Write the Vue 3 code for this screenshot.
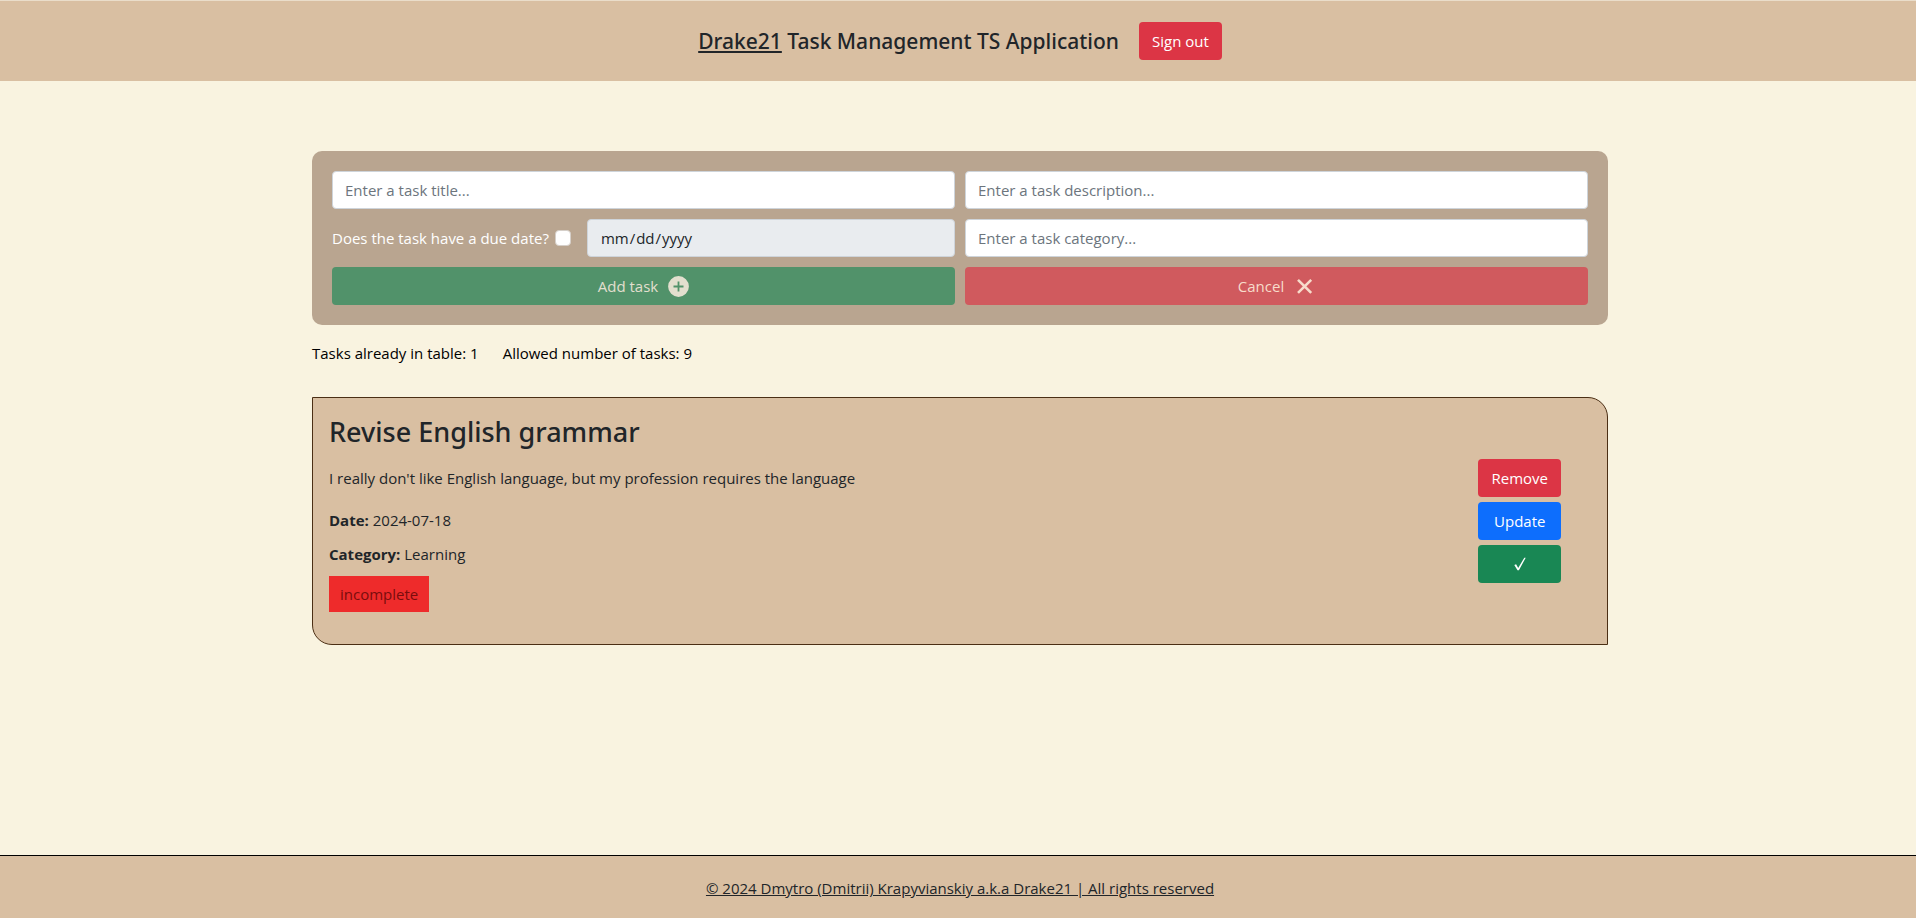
<script setup>
import { ref } from 'vue'

const title = ref('')
const description = ref('')
const category = ref('')
const dueDate = ref('')
const hasDueDate = ref(false)

const allowed = 9
const tasks = ref([
  {
    id: 1,
    title: 'Revise English grammar',
    description: "I really don't like English language, but my profession requires the language",
    date: '2024-07-18',
    category: 'Learning',
    status: 'incomplete'
  }
])
</script>

<template>
  <div class="page">
    <header class="header">
      <h1 class="brand"><span class="brand-name">Drake21</span> Task Management TS Application</h1>
      <button type="button" class="btn danger">Sign out</button>
    </header>

    <main class="content">
      <form class="task-form" @submit.prevent>
        <input v-model="title" class="field" type="text" placeholder="Enter a task title..." aria-label="Task title" />
        <input v-model="description" class="field" type="text" placeholder="Enter a task description..." aria-label="Task description" />
        <div class="due">
          <label class="due-label" for="has-due">Does the task have a due date?</label>
          <input id="has-due" v-model="hasDueDate" class="check" type="checkbox" />
          <input v-model="dueDate" class="field date" type="date" aria-label="Due date" :disabled="!hasDueDate" />
        </div>
        <input v-model="category" class="field" type="text" placeholder="Enter a task category..." aria-label="Task category" />
        <button type="submit" class="btn success" :disabled="!title">
          <span>Add task</span>
          <svg class="icon" viewBox="0 0 21 21" aria-hidden="true">
            <path fill="currentColor" fill-rule="evenodd" d="M10.5 0.1a10.4 10.4 0 1 0 0 20.8a10.4 10.4 0 1 0 0-20.8zM9.6 5.5h1.8v4.1h4.1v1.8h-4.1v4.1H9.6v-4.1H5.5V9.6h4.1z" />
          </svg>
        </button>
        <button type="button" class="btn danger" :disabled="!title">
          <span>Cancel</span>
          <svg class="icon" viewBox="0 0 21 21" aria-hidden="true">
            <path fill="none" stroke="currentColor" stroke-width="2.6" d="M4 3.9L17.2 16.9M17.2 3.9L4 16.9" />
          </svg>
        </button>
      </form>

      <div class="counts">
        <span>Tasks already in table: {{ tasks.length }}</span>
        <span>Allowed number of tasks: {{ allowed }}</span>
      </div>

      <article v-for="task in tasks" :key="task.id" class="card">
        <div class="info">
          <h2 class="card-title">{{ task.title }}</h2>
          <p class="description">{{ task.description }}</p>
          <p class="meta"><strong>Date:</strong> {{ task.date }}</p>
          <p class="meta"><strong>Category:</strong> {{ task.category }}</p>
          <span class="status">{{ task.status }}</span>
        </div>
        <div class="actions">
          <button type="button" class="btn danger">Remove</button>
          <button type="button" class="btn primary">Update</button>
          <button type="button" class="btn success" aria-label="Mark as complete">
            <svg class="tick" viewBox="0 0 12 14" aria-hidden="true">
              <path fill="currentColor" d="M0.3 8.1L2.1 7.3L4.2 11L10.3 0.8H11.7L4.9 13.2H3.5z" />
            </svg>
          </button>
        </div>
      </article>
    </main>

    <footer class="footer">
      <a href="#" class="copyright">© 2024 Dmytro (Dmitrii) Krapyvianskiy a.k.a Drake21 | All rights reserved</a>
    </footer>
  </div>
</template>

<style>
body {
  margin: 0;
  background: #f9f3e0;
}
</style>

<style scoped>
.page {
  box-sizing: border-box;
  display: flex;
  flex-direction: column;
  min-height: 100vh;
  border-top: 1px solid #eaddca;
  background: #f9f3e0;
  color: #212529;
  font-family: "Segoe UI", "Open Sans", "Noto Sans", sans-serif;
  font-size: 15px;
  line-height: 24px;
}

.page *,
.page *::before {
  box-sizing: border-box;
}

.header {
  display: flex;
  align-items: center;
  justify-content: center;
  gap: 20px;
  height: 80px;
  padding-left: 4px;
  background: #d9bfa2;
}

.brand,
.card-title {
  font-family: "Segoe UI", "Noto Sans", "Open Sans", sans-serif;
  font-weight: 500;
}

.brand {
  margin: 0;
  font-size: 21px;
  line-height: 28px;
}

.brand-name {
  text-decoration: underline;
}

.btn {
  display: flex;
  align-items: center;
  justify-content: center;
  gap: 10px;
  height: 38px;
  padding: 0 13px;
  border: 0;
  border-radius: 4px;
  color: #fff;
  font: inherit;
  cursor: pointer;
}

.btn:disabled {
  cursor: default;
}

.danger {
  background: #dc3545;
}

.primary {
  background: #0d6efd;
}

.success {
  background: #198754;
}

.content {
  width: 100%;
  max-width: 1324px;
  margin: 0 auto;
  padding: 70px 12px 24px 16px;
}

.task-form {
  display: grid;
  grid-template-columns: 1fr 1fr;
  gap: 10px;
  padding: 20px;
  border-radius: 10px;
  background: #b9a590;
}

.task-form .success:disabled {
  background: #51926a;
  color: #e2dfce;
}

.task-form .danger:disabled {
  background: #d05a5e;
  color: #f7dccb;
}

.field {
  width: 100%;
  min-width: 0;
  height: 38px;
  padding: 6px 12px;
  border: 1px solid #ced4da;
  border-radius: 4px;
  background: #fff;
  color: #212529;
  font: inherit;
}

.field::placeholder {
  color: #6c757d;
  opacity: 1;
}

.due {
  display: flex;
  align-items: center;
}

.due-label {
  flex: none;
  color: #fff;
}

.check {
  appearance: none;
  flex: none;
  width: 16px;
  height: 16px;
  margin: 0 16px 0 6px;
  border: 1px solid #d5cfc9;
  border-radius: 4px;
  background: #fff;
}

.check:checked {
  background: #0d6efd;
}

.date:disabled {
  background: #e9ecef;
}

.date::-webkit-calendar-picker-indicator {
  display: none;
}

.icon {
  width: 21px;
  height: 21px;
}

.counts {
  display: flex;
  gap: 24px;
  margin-top: 16px;
  color: #000;
}

.card {
  display: flex;
  align-items: center;
  justify-content: space-between;
  margin-top: 32px;
  padding: 16px 46px 16px 16px;
  border: 1px solid #4b2e14;
  border-radius: 0 20px 0 20px;
  background: #d9bfa2;
}

.info {
  padding-bottom: 16px;
}

.card-title {
  margin: 0 0 16px;
  font-size: 27px;
  line-height: 36px;
}

.description {
  margin: 0 0 18px;
}

.meta {
  margin: 0 0 10px;
}

.status {
  display: inline-block;
  padding: 6px 11px;
  background: #ee2b2b;
  color: #7a0d0d;
}

.actions {
  display: flex;
  flex-direction: column;
  gap: 5px;
}

.tick {
  width: 12px;
  height: 14px;
}

.footer {
  display: flex;
  align-items: center;
  justify-content: center;
  height: 63px;
  margin-top: auto;
  padding: 2px 0 0 4px;
  border-top: 1px solid #000;
  background: #d9bfa2;
}

.copyright {
  color: #212529;
}
</style>
